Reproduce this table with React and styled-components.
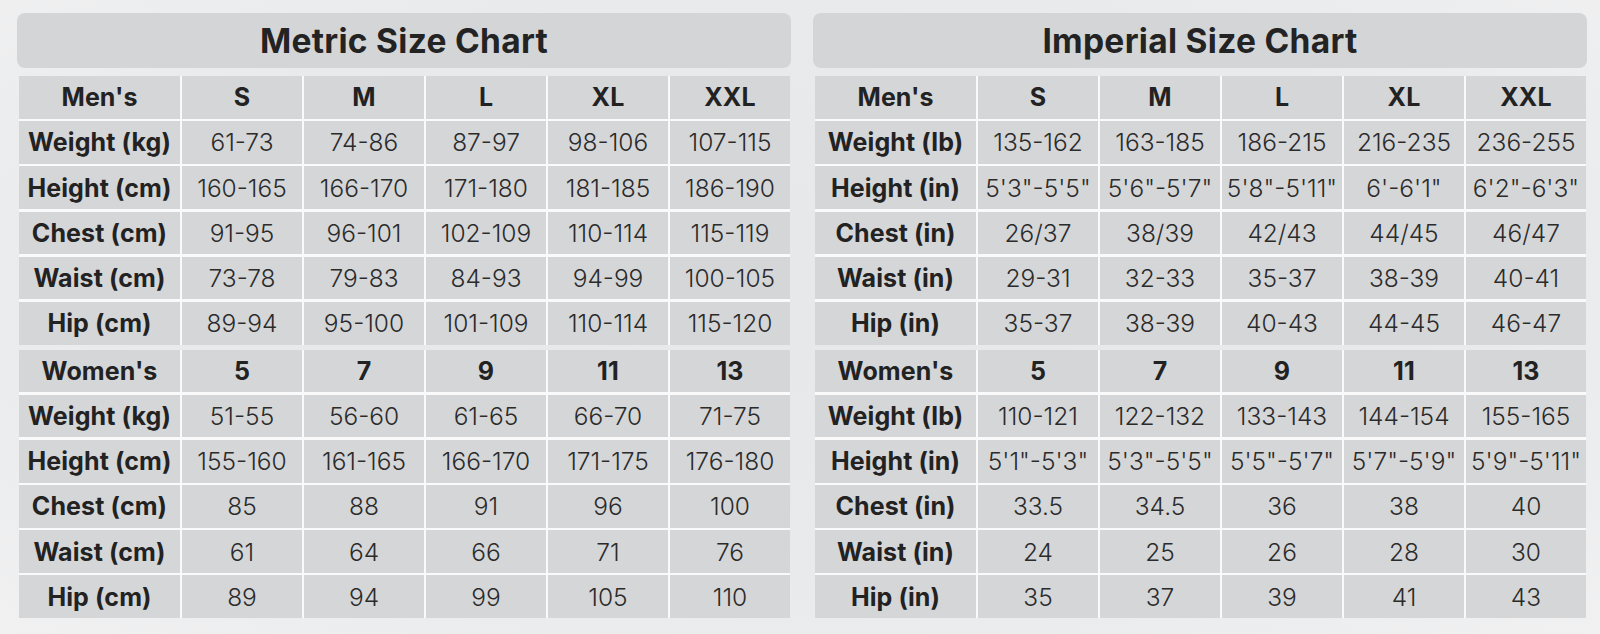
import React from "react";
import styled, { createGlobalStyle } from "styled-components";

const Global = createGlobalStyle`
  html, body { margin: 0; padding: 0; }
  body {
    width: 1600px;
    height: 634px;
    overflow: hidden;
    background: radial-gradient(ellipse at 50% 45%, #e7e8e9 0%, #e9eaeb 60%, #f1f1f2 100%);
    font-family: Inter, "Open Sans", "Liberation Sans", sans-serif;
    color: #232323;
  }
`;

const Page = styled.div`
  display: flex;
  gap: 22px;
  padding: 13px 13px 0 17px;
`;

const Panel = styled.section`
  width: 774px;
  display: flex;
  flex-direction: column;
  gap: 8px;
`;

const TitleBar = styled.h2`
  margin: 0;
  height: 55px;
  border-radius: 8px;
  background: #d4d5d7;
  display: flex;
  align-items: center;
  justify-content: center;
  font-size: 33.5px;
  font-weight: 700;
  letter-spacing: 0.3px;
  color: #232323;
`;

const Table = styled.div`
  margin: 0 1px 0 2px;
  display: flex;
  flex-direction: column;
  gap: 5px;
`;

const Group = styled.div`
  display: grid;
  grid-template-columns: 161px repeat(5, 120px);
  grid-auto-rows: 42.6px;
  column-gap: 2px;
  row-gap: 2.6px;
  background: #fafafa;
`;

const Cell = styled.div`
  background: #d5d6d8;
  display: flex;
  align-items: center;
  justify-content: center;
  font-size: ${(p) => (p.$bold ? "25px" : "24.5px")};
  font-weight: ${(p) => (p.$bold ? 700 : 300)};
  color: ${(p) => (p.$bold ? "#222" : "#2b2b2b")};
  white-space: nowrap;
  letter-spacing: ${(p) => (p.$bold ? "0.1px" : "0")};
`;

const metric = [
  {
    head: ["Men's", "S", "M", "L", "XL", "XXL"],
    rows: [
      ["Weight (kg)", "61-73", "74-86", "87-97", "98-106", "107-115"],
      ["Height (cm)", "160-165", "166-170", "171-180", "181-185", "186-190"],
      ["Chest (cm)", "91-95", "96-101", "102-109", "110-114", "115-119"],
      ["Waist (cm)", "73-78", "79-83", "84-93", "94-99", "100-105"],
      ["Hip (cm)", "89-94", "95-100", "101-109", "110-114", "115-120"],
    ],
  },
  {
    head: ["Women's", "5", "7", "9", "11", "13"],
    rows: [
      ["Weight (kg)", "51-55", "56-60", "61-65", "66-70", "71-75"],
      ["Height (cm)", "155-160", "161-165", "166-170", "171-175", "176-180"],
      ["Chest (cm)", "85", "88", "91", "96", "100"],
      ["Waist (cm)", "61", "64", "66", "71", "76"],
      ["Hip (cm)", "89", "94", "99", "105", "110"],
    ],
  },
];

const imperial = [
  {
    head: ["Men's", "S", "M", "L", "XL", "XXL"],
    rows: [
      ["Weight (lb)", "135-162", "163-185", "186-215", "216-235", "236-255"],
      ["Height (in)", "5'3\"-5'5\"", "5'6\"-5'7\"", "5'8\"-5'11\"", "6'-6'1\"", "6'2\"-6'3\""],
      ["Chest (in)", "26/37", "38/39", "42/43", "44/45", "46/47"],
      ["Waist (in)", "29-31", "32-33", "35-37", "38-39", "40-41"],
      ["Hip (in)", "35-37", "38-39", "40-43", "44-45", "46-47"],
    ],
  },
  {
    head: ["Women's", "5", "7", "9", "11", "13"],
    rows: [
      ["Weight (lb)", "110-121", "122-132", "133-143", "144-154", "155-165"],
      ["Height (in)", "5'1\"-5'3\"", "5'3\"-5'5\"", "5'5\"-5'7\"", "5'7\"-5'9\"", "5'9\"-5'11\""],
      ["Chest (in)", "33.5", "34.5", "36", "38", "40"],
      ["Waist (in)", "24", "25", "26", "28", "30"],
      ["Hip (in)", "35", "37", "39", "41", "43"],
    ],
  },
];

function Chart({ title, groups }) {
  return (
    <Panel>
      <TitleBar>{title}</TitleBar>
      <Table>
        {groups.map((g, gi) => (
          <Group key={gi}>
            {g.head.map((h, i) => (
              <Cell key={"h" + i} $bold>
                {h}
              </Cell>
            ))}
            {g.rows.map((r, ri) =>
              r.map((v, ci) => (
                <Cell key={ri + "-" + ci} $bold={ci === 0}>
                  {v}
                </Cell>
              ))
            )}
          </Group>
        ))}
      </Table>
    </Panel>
  );
}

export default function App() {
  return (
    <>
      <Global />
      <Page>
        <Chart title="Metric Size Chart" groups={metric} />
        <Chart title="Imperial Size Chart" groups={imperial} />
      </Page>
    </>
  );
}
